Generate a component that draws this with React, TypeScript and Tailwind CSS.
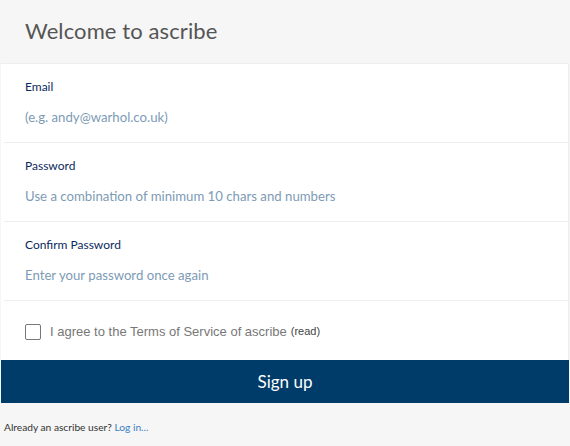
const fields = [
  { label: 'Email', placeholder: '(e.g. andy@warhol.co.uk)' },
  { label: 'Password', placeholder: 'Use a combination of minimum 10 chars and numbers' },
  { label: 'Confirm Password', placeholder: 'Enter your password once again' },
]

export default function App() {
  return (
    <div className="w-[570px] h-[446px] bg-[#f6f6f6] font-['Lato','Noto_Sans',sans-serif]">
      <div className="h-[63px] flex items-center pl-[25px] pb-[2px]">
        <h1 className="text-[22px] text-[#555] tracking-[0.1px]">Welcome to ascribe</h1>
      </div>
      <div className="ml-[1px] mr-[1px] bg-white border-t border-r border-[#eee]">
        {fields.map((f) => (
          <div key={f.label} className="ml-[3px] h-[79px] border-b border-[#eee] pl-[21px] pt-[15px]">
            <label className="block text-[12px] text-[#0a2a5c] leading-[16px]">{f.label}</label>
            <input
              className="mt-[13px] block w-full bg-transparent outline-none text-[13.2px] leading-[18px] placeholder:text-[#7d9bb6]"
              placeholder={f.placeholder}
            />
          </div>
        ))}
        <div className="h-[59px] flex items-center pl-[24px] pt-[2px] font-['Liberation_Sans',Arial,sans-serif]">
          <span className="w-[16px] h-[16px] border border-[#777] rounded-[2px] bg-white" />
          <span className="ml-[9px] text-[13px] text-[#777]">I agree to the Terms of Service of ascribe</span>
          <span className="ml-[4px] text-[11px] text-[#444]">(read)</span>
        </div>
      </div>
      <button className="ml-[1px] w-[568px] h-[43px] bg-[#003c69] text-white text-[17px] flex items-center justify-center">
        Sign up
      </button>
      <p className="mt-[17px] pl-[4px] text-[10.2px] text-[#333]">
        Already an ascribe user? <a className="text-[#3a80c0]">Log in...</a>
      </p>
    </div>
  )
}
